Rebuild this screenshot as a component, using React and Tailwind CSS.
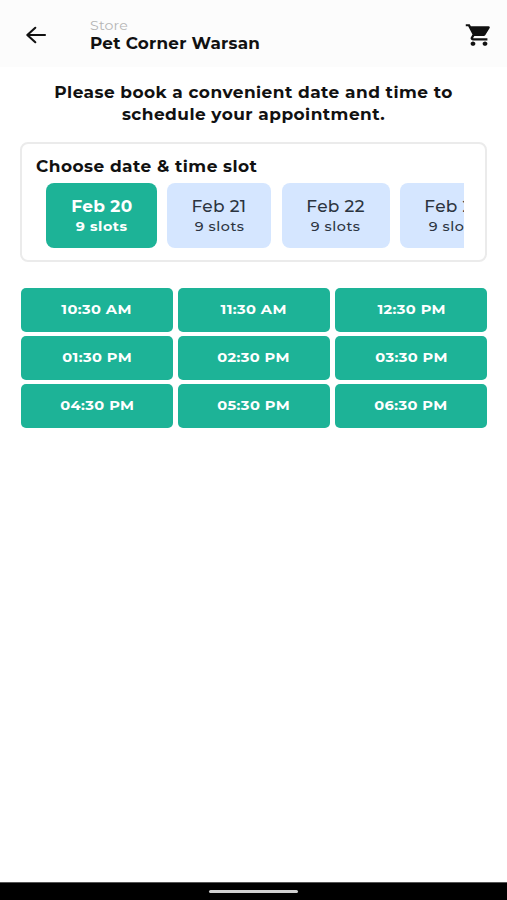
import { MdShoppingCart } from 'react-icons/md';

const DATES = [
  { label: 'Feb 20', slots: 9, style: 'w-[111px] bg-[#1db397] text-white font-bold' },
  { label: 'Feb 21', slots: 9, style: 'w-[104px] bg-[#d5e6ff] text-[#2c3440] font-medium' },
  { label: 'Feb 22', slots: 9, style: 'w-[108px] bg-[#d5e6ff] text-[#2c3440] font-medium' },
  { label: 'Feb 23', slots: 9, style: 'w-[108px] bg-[#d5e6ff] text-[#2c3440] font-medium' },
];

const TIMES = [
  '10:30 AM', '11:30 AM', '12:30 PM',
  '01:30 PM', '02:30 PM', '03:30 PM',
  '04:30 PM', '05:30 PM', '06:30 PM',
];

function BackArrow() {
  return (
    <svg
      width="22"
      height="20"
      viewBox="0 0 22 20"
      fill="none"
      stroke="currentColor"
      strokeWidth="2.1"
      strokeLinecap="round"
      strokeLinejoin="round"
    >
      <path d="M20 10H2.3M10.3 2.8L2.3 10l8 7.2" />
    </svg>
  );
}

function Header() {
  return (
    <header className="h-[67px] shrink-0 bg-[#fcfcfc] flex items-start">
      <button className="ml-[25px] mt-[25px]" aria-label="Back">
        <BackArrow />
      </button>
      <div className="ml-[43px] mt-[17px] whitespace-nowrap origin-left scale-x-[1.05]">
        <p className="text-[13.5px] leading-[17px] text-[#b5b5b5] tracking-[0.15px]">Store</p>
        <h1 className="mt-px text-[16px] leading-[18px] font-bold tracking-[0.22px]">Pet Corner Warsan</h1>
      </div>
      <button className="ml-auto mr-[14px] mt-[21px]" aria-label="Cart">
        <MdShoppingCart size={28} className="scale-x-[1.03] scale-y-[0.93]" />
      </button>
    </header>
  );
}

function DateCard({ label, slots, style }) {
  return (
    <button className={`h-[65px] shrink-0 rounded-lg flex flex-col items-center whitespace-nowrap ${style}`}>
      <span className="mt-[14px] text-[16px] leading-[20px] tracking-[0.3px] scale-x-[1.06]">{label}</span>
      <span className="text-[13px] leading-[19px] tracking-[0.5px] scale-x-[1.1]">{slots} slots</span>
    </button>
  );
}

export default function App() {
  return (
    <div className="w-[507px] h-[900px] flex flex-col bg-white text-[#111] overflow-hidden font-[Montserrat,Inter,sans-serif]">
      <Header />
      <main className="flex-1 px-[20px]">
        <p className="mt-[15px] text-center text-[16px] leading-[21.5px] font-bold tracking-[0.42px] scale-x-[1.06]">
          Please book a convenient date and time to
          <br />
          schedule your appointment.
        </p>

        <section className="mt-[17px] h-[120px] rounded-lg border-2 border-[#ebebeb] pl-[14px] pr-[21px]">
          <h2 className="mt-[11.5px] text-[16px] leading-[21px] font-bold tracking-[0.42px] origin-left scale-x-[1.06]">
            Choose date &amp; time slot
          </h2>
          <div className="mt-[6.5px] ml-[10px] flex gap-[10.3px] overflow-hidden">
            {DATES.map((d) => (
              <DateCard key={d.label} {...d} />
            ))}
          </div>
        </section>

        <div className="mt-[26px] pl-[0.5px] grid grid-cols-3 gap-x-[5px] gap-y-[4.2px]">
          {TIMES.map((t) => (
            <button key={t} className="h-[44px] rounded-[5px] bg-[#1db397] text-white text-[13.3px] font-bold">
              <span className="inline-block pl-[0.5px] tracking-[0.35px] scale-x-[1.1]">{t}</span>
            </button>
          ))}
        </div>
      </main>

      {/* Gesture navigation bar */}
      <div className="h-[18px] shrink-0 bg-black border-t border-[#555] flex items-center justify-center">
        <div className="w-[89px] h-[3px] rounded-full bg-[#d0d0d0]" />
      </div>
    </div>
  );
}
